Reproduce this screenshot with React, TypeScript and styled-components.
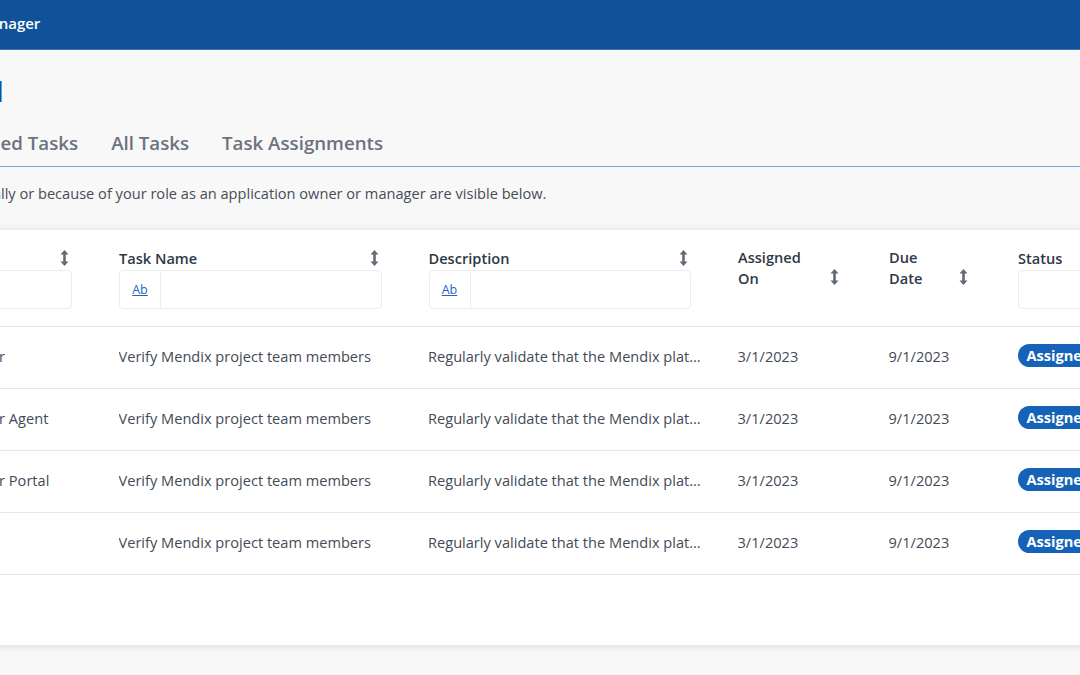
import * as React from 'react';
import styled, { createGlobalStyle } from 'styled-components';

const GlobalStyle = createGlobalStyle`
  html, body {
    margin: 0;
    height: 100%;
    overflow: hidden;
    background: #f8f8f8;
    font-family: "Open Sans", "Liberation Sans", sans-serif;
  }
`;

const COLUMNS = '309.5px 309.5px 309.5px 151px 129px 300px';

const TopBar = styled.header`
  height: 49px;
  background: #0f5299;
  border-bottom: 1px solid #3d78b5;
  display: flex;
  align-items: center;
  padding-left: 112px;
  margin-left: -230.5px;
  width: 1500px;
`;

const AppName = styled.div`
  color: #fff;
  font-size: 15px;
  font-weight: 600;
  padding-bottom: 3px;
`;

const Page = styled.main`
  margin-left: -230.5px;
  width: 1500px;
  padding: 0 0 0 20px;
  box-sizing: border-box;
`;

const Heading = styled.h1`
  margin: 0;
  height: 84px;
  padding: 20px 0 0 51px;
  box-sizing: border-box;
  color: #0f5299;
  font-size: 28px;
  font-weight: 400;
  line-height: 42px;
`;

const Tabs = styled.nav`
  display: flex;
  gap: 33px;
  height: 32px;
  padding-left: 121px;
  border-bottom: 1px solid #6ea8e0;
`;

const Tab = styled.a`
  color: #6c727e;
  font-size: 18.7px;
  font-weight: 600;
  line-height: 17px;
`;

const Intro = styled.p`
  margin: 0;
  height: 63px;
  padding: 16px 0 0 4px;
  box-sizing: border-box;
  color: #474d57;
  font-size: 14.6px;
  line-height: 20px;
`;

const Card = styled.section`
  background: #fff;
  height: 415px;
  padding-left: 20px;
  box-shadow: 0 1px 8px rgba(0, 0, 0, 0.12);
`;

const HeadRow = styled.div`
  display: grid;
  grid-template-columns: ${COLUMNS};
  height: 96px;
  border-bottom: 1px solid #e6e6e6;
`;

const HeadCell = styled.div`
  padding: 17px 47px 0 0;
`;

const HeadTop = styled.div`
  display: flex;
  justify-content: space-between;
  align-items: center;
  padding-right: 3px;
  min-height: 22px;
  margin-bottom: 1px;
`;

const HeadLabel = styled.span`
  color: #2f3846;
  font-size: 14.6px;
  font-weight: 600;
  line-height: 21px;
`;

const SortArrow = styled.svg<{ $wrapped?: boolean }>`
  width: 9px;
  height: 16px;
  flex: none;
  color: #626a75;
  margin-top: ${(p) => (p.$wrapped ? '18px' : '0')};
`;

const Filter = styled.div`
  display: flex;
  height: 39px;
  box-sizing: border-box;
  border: 1px solid #ececec;
  border-radius: 4px;
  background: #fff;
`;

const FilterType = styled.a`
  width: 41px;
  box-sizing: border-box;
  border-right: 1px solid #ececec;
  display: flex;
  align-items: center;
  justify-content: center;
  color: #2467bd;
  font-size: 12.5px;
  text-decoration: underline;
`;

const Row = styled.div`
  display: grid;
  grid-template-columns: ${COLUMNS};
  height: 61px;
  align-items: center;
  border-bottom: 1px solid #e6e6e6;
`;

const Cell = styled.div`
  margin-left: -0.5px;
  margin-bottom: 3px;
  padding-right: 36px;
  color: #434b57;
  font-size: 14.6px;
  line-height: 20px;
  white-space: nowrap;
  overflow: hidden;
  text-overflow: ellipsis;
`;

const StatusPill = styled.span`
  display: inline-block;
  background: #1562b8;
  color: #fff;
  font-size: 14.6px;
  font-weight: 700;
  line-height: 23px;
  padding: 0 9px;
  border-radius: 12px;
  margin-bottom: 2px;
`;

const Sort = ({ wrapped }: { wrapped?: boolean }) => (
  <SortArrow $wrapped={wrapped} viewBox="0 0 9 16" fill="currentColor">
    <path d="M4.5 0 8.5 4.6H5.8v6.8h2.7L4.5 16 .5 11.4h2.7V4.6H.5z" />
  </SortArrow>
);

const DESCRIPTION =
  'Regularly validate that the Mendix platform users still need access to the project';

const tasks = [
  { app: 'Mendix Warehouse Manager' },
  { app: 'Mendix Warehouse Manager Agent' },
  { app: 'Mendix Warehouse Manager Portal' },
  { app: 'Mendix Order' },
];

const App = () => (
  <>
    <GlobalStyle />
    <TopBar>
      <AppName>Mendix Task Manager</AppName>
    </TopBar>
    <Page>
      <Heading>Task Control</Heading>
      <Tabs>
        <Tab>My Assigned Tasks</Tab>
        <Tab>All Tasks</Tab>
        <Tab>Task Assignments</Tab>
      </Tabs>
      <Intro>
        Tasks assigned to you personally or because of your role as an application owner or
        manager are visible below.
      </Intro>
      <Card>
        <HeadRow>
          <HeadCell>
            <HeadTop>
              <HeadLabel>Application</HeadLabel>
              <Sort />
            </HeadTop>
            <Filter>
              <FilterType>Ab</FilterType>
            </Filter>
          </HeadCell>
          <HeadCell>
            <HeadTop>
              <HeadLabel>Task Name</HeadLabel>
              <Sort />
            </HeadTop>
            <Filter>
              <FilterType>Ab</FilterType>
            </Filter>
          </HeadCell>
          <HeadCell>
            <HeadTop>
              <HeadLabel>Description</HeadLabel>
              <Sort />
            </HeadTop>
            <Filter>
              <FilterType>Ab</FilterType>
            </Filter>
          </HeadCell>
          <HeadCell>
            <HeadTop>
              <HeadLabel>
                Assigned
                <br />
                On
              </HeadLabel>
              <Sort wrapped />
            </HeadTop>
          </HeadCell>
          <HeadCell>
            <HeadTop>
              <HeadLabel>
                Due
                <br />
                Date
              </HeadLabel>
              <Sort wrapped />
            </HeadTop>
          </HeadCell>
          <HeadCell>
            <HeadTop>
              <HeadLabel>Status</HeadLabel>
            </HeadTop>
            <Filter />
          </HeadCell>
        </HeadRow>
        {tasks.map((task) => (
          <Row key={task.app}>
            <Cell>{task.app}</Cell>
            <Cell>Verify Mendix project team members</Cell>
            <Cell>{DESCRIPTION}</Cell>
            <Cell>3/1/2023</Cell>
            <Cell>9/1/2023</Cell>
            <Cell>
              <StatusPill>Assigned</StatusPill>
            </Cell>
          </Row>
        ))}
      </Card>
    </Page>
  </>
);

export default App;
